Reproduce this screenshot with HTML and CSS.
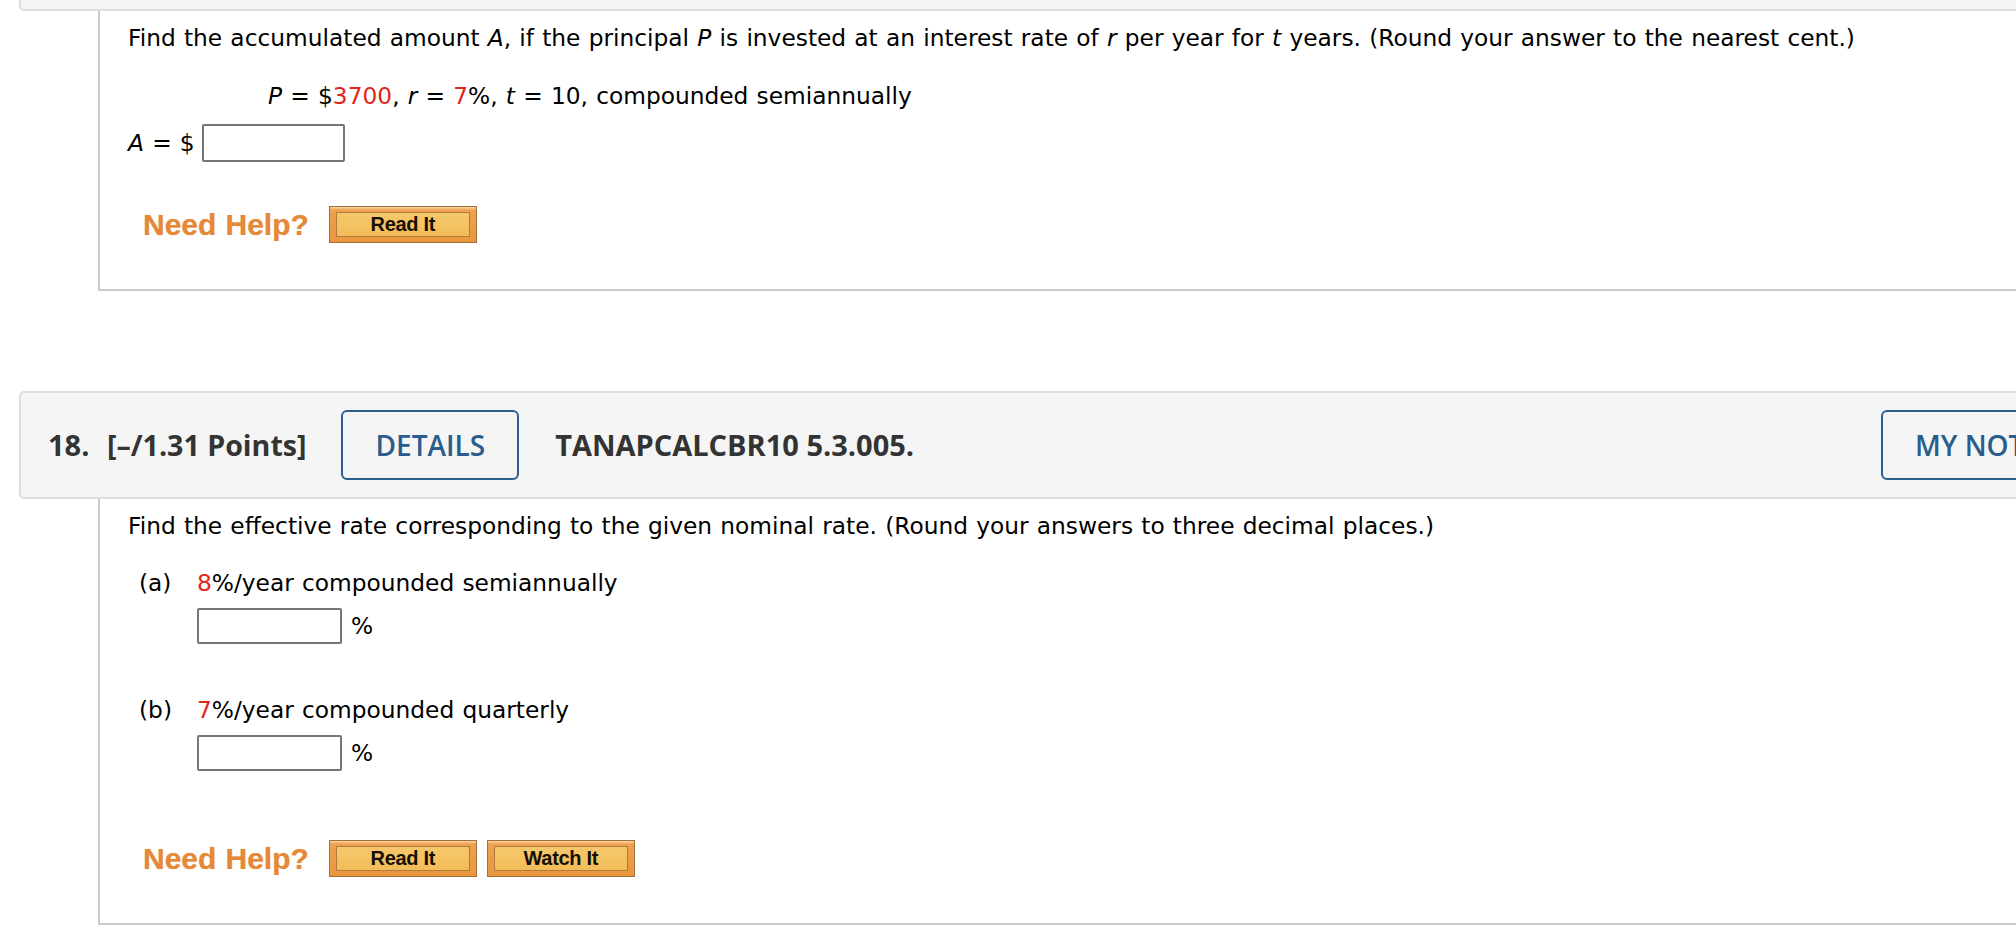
FILE: index.html
```html
<!DOCTYPE html>
<html lang="en">
<head>
<meta charset="utf-8">
<title>Questions</title>
<link rel="stylesheet" href="styles.css">
</head>
<body>
<div class="page">
  <section class="q">
    <div class="q-head q-head-tail"></div>
    <div class="q-body">
      <p class="prompt">Find the accumulated amount <i>A</i>, if the principal <i>P</i> is invested at an interest rate of <i>r</i> per year for <i>t</i> years. (Round your answer to the nearest cent.)</p>
      <p class="given"><i>P</i> = $<span class="red">3700</span>, <i>r</i> = <span class="red">7</span>%, <i>t</i> = 10, compounded semiannually</p>
      <div class="answer-row">
        <span><i>A</i> = $</span>
        <input type="text" class="blank" aria-label="A">
      </div>
      <div class="help-row">
        <span class="need-help">Need Help?</span>
        <button class="help-btn"><span>Read It</span></button>
      </div>
    </div>
  </section>

  <section class="q q-next">
    <div class="q-head">
      <div class="head-main">
        <span class="q-num">18.</span>
        <span class="q-points">[–/1.31 Points]</span>
        <button class="outline-btn details-btn">DETAILS</button>
        <span class="q-code">TANAPCALCBR10 5.3.005.</span>
      </div>
      <button class="outline-btn">MY NOTES</button>
    </div>
    <div class="q-body">
      <p class="prompt">Find the effective rate corresponding to the given nominal rate. (Round your answers to three decimal places.)</p>
      <div class="part">
        <span class="part-label">(a)</span>
        <div class="part-main">
          <div><span class="red">8</span>%/year compounded semiannually</div>
          <div class="input-row"><input type="text" class="blank blank-sm" aria-label="a"><span>%</span></div>
        </div>
      </div>
      <div class="part part-b">
        <span class="part-label">(b)</span>
        <div class="part-main">
          <div><span class="red">7</span>%/year compounded quarterly</div>
          <div class="input-row"><input type="text" class="blank blank-sm" aria-label="b"><span>%</span></div>
        </div>
      </div>
      <div class="help-row help-row-2">
        <span class="need-help">Need Help?</span>
        <button class="help-btn"><span>Read It</span></button>
        <button class="help-btn"><span>Watch It</span></button>
      </div>
    </div>
  </section>
</div>
</body>
</html>
```

FILE: styles.css
```css
html, body {
  margin: 0;
  padding: 0;
  background: #fff;
  overflow: hidden;
}

body {
  font-family: "DejaVu Sans", Verdana, sans-serif;
  color: #000;
}

.page {
  padding-left: 19px;
  width: 2300px;
}

.q-next {
  margin-top: 100px;
}

.q-head {
  background: #f5f5f5;
  border: 2px solid #dedede;
  border-right: none;
  border-radius: 5px 0 0 5px;
  display: flex;
  align-items: center;
  padding: 17px 0 17px 27px;
  font-family: "Open Sans", sans-serif;
  color: #333;
}

.q-head-tail {
  height: 9px;
  padding: 0;
  border-top: none;
  border-radius: 0 0 0 5px;
}

.head-main {
  flex: 0 0 1833px;
  display: flex;
  align-items: center;
}

.q-num,
.q-points,
.q-code {
  font-size: 29px;
  font-weight: 700;
  line-height: 40px;
}

.q-num {
  width: 59px;
}

.q-points {
  font-size: 28.6px;
  margin-right: 35px;
}

.q-code {
  margin-left: 36px;
}

.outline-btn {
  height: 70px;
  box-sizing: border-box;
  padding: 0 32px;
  border: 2px solid #2c5f8f;
  border-radius: 6px;
  background: transparent;
  color: #2a5d8c;
  font-family: "Open Sans", sans-serif;
  font-size: 28px;
  font-weight: 600;
  white-space: nowrap;
}

.q-body {
  margin-left: 79px;
  border-left: 2px solid #cacaca;
  border-bottom: 2px solid #cacaca;
  padding: 13px 0 46px 28px;
  font-size: 23.3px;
  line-height: 28px;
  word-spacing: 0.8px;
}

.q-body p {
  margin: 0;
}

.given {
  margin-top: 30px !important;
  padding-left: 140px;
}

.red {
  color: #e3261c;
}

.answer-row {
  margin-top: 14px;
  display: flex;
  align-items: center;
  gap: 7px;
}

.blank {
  width: 143px;
  height: 38px;
  box-sizing: border-box;
  border: 2px solid #767676;
  border-radius: 2px;
  background: #fff;
  margin: 0;
  padding: 0;
}

.blank-sm {
  width: 145px;
  height: 36px;
}

.part {
  display: grid;
  grid-template-columns: 58px 1fr;
  padding-left: 11px;
  margin-top: 29px;
}

.part-b {
  margin-top: 52px;
}

.input-row {
  display: flex;
  align-items: center;
  gap: 9px;
  margin-top: 11px;
}

.help-row {
  display: flex;
  align-items: center;
  padding-left: 15px;
  margin-top: 44px;
}

.help-row-2 {
  margin-top: 69px;
}

.need-help {
  font-family: "Liberation Sans", Arial, sans-serif;
  font-weight: 700;
  font-size: 30px;
  line-height: 37px;
  color: #e4893a;
  text-shadow: 0 0 1px rgba(228, 137, 58, 0.6);
  margin-right: 20px;
}

.help-btn {
  width: 148px;
  height: 37px;
  box-sizing: border-box;
  margin: 0 10px 0 0;
  padding: 5px 6px;
  border: 1px solid #a4703a;
  background: linear-gradient(#f8d7ad 0, #eea150 3px, #e9963f 100%);
  display: flex;
}

.help-btn span {
  flex: 1;
  display: flex;
  align-items: center;
  justify-content: center;
  border: 1px solid #b27a3d;
  background: linear-gradient(#f6c86c, #f2bd58);
  font-family: "Liberation Sans", Arial, sans-serif;
  font-weight: 700;
  font-size: 20px;
  letter-spacing: -0.3px;
  color: #151005;
}
```
